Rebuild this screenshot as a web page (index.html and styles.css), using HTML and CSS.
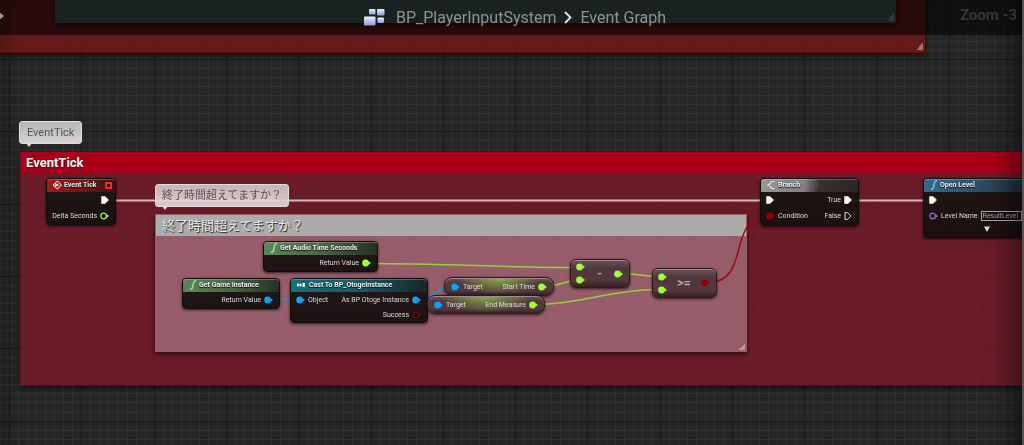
FILE: index.html
```html
<!DOCTYPE html>
<html lang="ja">
<head>
<meta charset="utf-8">
<title>BP_PlayerInputSystem</title>
<link rel="stylesheet" href="styles.css">
</head>
<body>
<svg class="defs" aria-hidden="true">
  <symbol id="pin" viewBox="0 0 9 8"><circle cx="3.6" cy="4" r="3.4" fill="currentColor"/><path d="M6.7 2.2L9 4L6.7 5.8Z" fill="currentColor"/></symbol>
  <symbol id="ring" viewBox="0 0 9 8"><circle cx="3.6" cy="4" r="2.8" fill="#0a0808" stroke="currentColor" stroke-width="1.3"/><path d="M6.8 2.2L9 4L6.8 5.8Z" fill="currentColor"/></symbol>
  <symbol id="exec" viewBox="0 0 8 8"><path d="M.6 .4H4L7.5 4L4 7.6H.6Z" fill="#fff" stroke="#fff" stroke-width=".6"/></symbol>
  <symbol id="exec-off" viewBox="0 0 8 8"><path d="M1 .7H3.6L7 4L3.6 7.3H1Z" fill="none" stroke="#ddd" stroke-width="1"/></symbol>
  <symbol id="func" viewBox="0 0 8 10"><path d="M7.3 1C5.5 .5 4.7 1.5 4.4 3.2L3.6 7C3.3 8.7 2.4 9.6 .8 9" fill="none" stroke="currentColor" stroke-width="1.5"/></symbol>
</svg>
<main class="graph">
  <canvas class="grid" id="grid"></canvas>

  <section class="comment upper"><i class="grip"></i></section>
  <section class="comment teal"><i class="grip"></i></section>
  <section class="comment tick"><h2>EventTick</h2></section>
  <section class="comment finish"><h2>終了時間超えてますか？</h2><i class="grip"></i></section>

  <svg class="wires" aria-hidden="true">
    <g fill="none" stroke-width="1.5">
      <path stroke="#c9bfc1" stroke-width="1.8" d="M108 200.5H768M850 200.5H932"/>
      <path stroke="#93d23c" d="M370 263.5C440 263.5 510 267.5 578 267.5M545 286.5C560 286.5 563 280.5 578 280.5M535 304.5C580 304.5 610 289.5 660 289.5M620 273.5C635 273.5 645 276.5 660 276.5"/>
      <path stroke="#1296e0" d="M271 299.5H297M419 299.5C434 299.5 437 286.5 452 286.5M419 299.5C428 299.5 427 304.5 435 304.5"/>
      <path stroke="#950b10" d="M708 282.5C752 282.5 726 216.5 768 216.5"/>
    </g>
  </svg>

  <div class="bubble bubble-tick">EventTick</div>
  <div class="bubble bubble-finish">終了時間超えてますか？</div>

  <article class="node exec event-tick">
    <header class="red"><svg class="ico" viewBox="0 0 10 10"><path d="M3.5 3V2.6L5.500 1L9.300 5L5.500 9L3.500 7.400V7M3.300 3.200L1 5L3.300 6.800V5.700H6V4.300H3.300Z" fill="none" stroke="#fff" stroke-width="1"/></svg><h3>Event Tick</h3><i class="delegate"></i></header>
    <div class="row end"><svg class="ex"><use href="#exec"/></svg></div>
    <div class="row end"><span>Delta Seconds</span><svg class="pin float"><use href="#ring"/></svg></div>
  </article>

  <article class="node audio">
    <header class="green"><svg class="fn"><use href="#func"/></svg><h3>Get Audio Time Seconds</h3></header>
    <div class="row end"><span>Return Value</span><svg class="pin float"><use href="#pin"/></svg></div>
  </article>

  <article class="node game">
    <header class="green"><svg class="fn"><use href="#func"/></svg><h3>Get Game Instance</h3></header>
    <div class="row end"><span>Return Value</span><svg class="pin object"><use href="#pin"/></svg></div>
  </article>

  <article class="node cast">
    <header class="cyan"><svg class="ico" viewBox="0 0 10 10"><path d="M1 3.500H2.600V6.500H1ZM2.600 4.600H4V3L6 5L4 7V5.400H2.600ZM7 3H9V7H7L6.300 5Z" fill="#fff"/></svg><h3>Cast To BP_OtogeInstance</h3></header>
    <div class="row"><svg class="pin object"><use href="#pin"/></svg><span>Object</span><span class="push">As BP Otoge Instance</span><svg class="pin object"><use href="#pin"/></svg></div>
    <div class="row end"><span>Success</span><svg class="pin bool-off"><use href="#ring"/></svg></div>
  </article>

  <article class="node getter start-time"><svg class="pin object"><use href="#pin"/></svg><span>Target</span><span class="push">Start Time</span><svg class="pin float"><use href="#pin"/></svg></article>
  <article class="node getter end-measure"><svg class="pin object"><use href="#pin"/></svg><span>Target</span><span class="push">End Measure</span><svg class="pin float"><use href="#pin"/></svg></article>

  <article class="node op minus">
    <div class="ins"><svg class="pin float"><use href="#pin"/></svg><svg class="pin float"><use href="#pin"/></svg></div>
    <b>-</b><svg class="pin float"><use href="#pin"/></svg>
  </article>
  <article class="node op compare">
    <div class="ins"><svg class="pin float"><use href="#pin"/></svg><svg class="pin float"><use href="#pin"/></svg></div>
    <b>&gt;=</b><svg class="pin bool"><use href="#pin"/></svg>
  </article>

  <article class="node exec branch">
    <header class="grey"><svg class="ico" viewBox="0 0 10 10"><path d="M8.500 1.500H6.500C4 1.500 4.500 5 2 5C4.500 5 4 8.500 6.500 8.500H8.500M1 5H3" fill="none" stroke="#eee" stroke-width="1.200"/></svg><h3>Branch</h3></header>
    <div class="row"><svg class="ex"><use href="#exec"/></svg><span class="push">True</span><svg class="ex"><use href="#exec"/></svg></div>
    <div class="row"><svg class="pin bool"><use href="#pin"/></svg><span>Condition</span><span class="push">False</span><svg class="ex"><use href="#exec-off"/></svg></div>
  </article>

  <article class="node exec open-level">
    <header class="blue"><svg class="fn"><use href="#func"/></svg><h3>Open Level</h3></header>
    <div class="row"><svg class="ex"><use href="#exec"/></svg></div>
    <div class="row"><svg class="pin name"><use href="#ring"/></svg><label for="level">Level Name</label><input id="level" value="ResultLevel"></div>
    <button class="expand" aria-label="Expand"><svg viewBox="0 0 6 6"><path d="M0 .5H6L3 6Z" fill="#ddd"/></svg></button>
  </article>

  <div class="vignette"></div>

  <nav class="titlebar">
    <svg class="bp" viewBox="0 0 21 17"><defs><linearGradient id="bpfill" x2="0" y2="1"><stop stop-color="#eef0fc"/><stop offset="1" stop-color="#8c9cd8"/></linearGradient></defs><g fill="url(#bpfill)"><rect x="5" y="0" width="6.500" height="5.500" rx="1"/><rect x="13" y="0" width="7.500" height="6.500" rx="1"/><rect x="0" y="7.500" width="11.500" height="9" rx="1"/><rect x="13.500" y="8.500" width="6.500" height="5.500" rx="1"/></g></svg>
    <button>BP_PlayerInputSystem</button>
    <svg class="chevron" viewBox="0 0 8 13"><path d="M1 1L6.500 6.500L1 12" fill="none" stroke="#e4e4e4" stroke-width="1.800"/></svg>
    <button>Event Graph</button>
    <span class="zoom">Zoom -3</span>
  </nav>
  <svg class="edge-pin" viewBox="0 0 4 8"><path d="M0 .5L4 4L0 7.500Z" fill="#999"/></svg>
</main>
<script src="grid.js"></script>
</body>
</html>
```

FILE: grid.js
```js
// Draws the graph's background grid: a dark line on every eighth step.
const canvas = document.getElementById('grid');
const step = 940 / 104;

function drawGrid() {
  const w = canvas.width = canvas.clientWidth;
  const h = canvas.height = canvas.clientHeight;
  const ctx = canvas.getContext('2d');
  const line = (i, origin, vertical) => {
    const p = Math.round(origin + i * step);
    ctx.fillStyle = i % 8 === 0 ? '#191919' : '#313131';
    if (vertical) ctx.fillRect(p, 0, 1, h);
    else ctx.fillRect(0, p, w, 1);
  };
  for (const major of [false, true]) {
    for (let i = -8; i * step < Math.max(w, h) + step; i++) {
      if ((i % 8 === 0) !== major) continue;
      line(i, 9, true);
      line(i, 59, false);
    }
  }
}

drawGrid();
window.addEventListener('resize', drawGrid);
```

FILE: styles.css
```css
* { box-sizing: border-box; }
body {
  margin: 0;
  background: #262626;
  color: #dcdcdc;
  font-family: Roboto, "Noto Sans CJK JP", sans-serif;
}
h2, h3 { margin: 0; }
button { border: 0; padding: 0; background: none; color: inherit; font: inherit; }
.defs { position: absolute; width: 0; height: 0; }

.graph {
  position: relative;
  min-height: 100vh;
  overflow: hidden;
  border-right: 2px solid #555;
}
.grid, .wires, .vignette { position: absolute; inset: 0; width: 100%; height: 100%; }
.vignette { pointer-events: none; box-shadow: inset -30px 0 30px -22px rgba(0, 0, 0, .5), inset 20px 0 20px -18px rgba(0, 0, 0, .3); }

/* comment boxes */
.comment { position: absolute; box-shadow: 0 2px 5px rgba(0, 0, 0, .6); }
.upper { left: -10px; top: -10px; width: 935px; height: 63px; background: rgba(130, 20, 22, .68); border-bottom: 1px solid #68090c; }
.teal { left: 55px; top: -10px; width: 841px; height: 33px; background: rgba(62, 92, 92, .88); }
.tick { left: 20px; right: -10px; top: 152px; height: 234px; background: rgba(138, 22, 42, .68); border-bottom: 1px solid #5c0712; }
.finish { left: 155px; top: 214px; width: 592px; height: 138px; padding: 1px; background: rgba(205, 168, 180, .47); }
.comment h2 { text-shadow: 1px 1px 1px #222; color: #f0f0f0; }
.tick h2 { margin-left: 1px; padding-left: 5px; background: #a90017; font-size: 13px; line-height: 21px; }
.finish h2 { padding-left: 6px; background: #ababab; font-size: 13px; font-weight: 400; line-height: 21px; color: #e8e8e8; }
.grip { position: absolute; right: 2px; bottom: 2px; width: 7px; height: 7px; background: linear-gradient(135deg, transparent 50%, rgba(225, 200, 200, .5) 50%); }

.bubble {
  position: absolute;
  padding: 0 6px;
  border: 1px solid #e2dddd;
  border-radius: 3px;
  background: linear-gradient(rgba(190, 190, 190, .95), rgba(222, 222, 222, .95));
  color: #555;
  font-size: 11px;
  line-height: 21px;
}
.bubble::after {
  content: "";
  position: absolute;
  left: 6px;
  top: 100%;
  border: 3px solid transparent;
  border-top: 4px solid #ddd;
}
.bubble-tick { left: 19px; top: 121px; padding: 0 7px; }
.bubble-finish { left: 155px; top: 184px; background: linear-gradient(rgba(208, 190, 194, .94), rgba(230, 215, 218, .92)); }

/* nodes */
.node {
  position: absolute;
  border: 1px solid #100c0c;
  border-radius: 4px;
  background: linear-gradient(rgba(30, 21, 21, .96), rgba(24, 16, 16, .96));
  box-shadow: 0 1px 3px rgba(0, 0, 0, .7);
  font-size: 7px;
  line-height: 8px;
  white-space: nowrap;
}
.node header {
  display: flex;
  align-items: center;
  gap: 2px;
  height: 13px;
  padding: 0 5px 2px;
  border-top: 1px solid rgba(255, 255, 255, .25);
  border-radius: 3px 3px 0 0;
}
.node h3 { font-size: 7px; line-height: 8px; color: #f0f0f0; text-shadow: 0 1px 1px #000; }
.red { background: linear-gradient(90deg, #a01c1c, #6b1515 60%, #3c1212); }
.green { background: linear-gradient(90deg, #5d8458, #4a6747 50%, #263024); }
.cyan { background: linear-gradient(90deg, #137079, #165a61 50%, #1c2526); }
.grey { background: linear-gradient(100deg, #969696, #808080 45%, #373232 60%, #2a2525); }
.blue { background: linear-gradient(90deg, #35698c, #2c5370 45%, #1f2830); }
.ico { width: 10px; height: 10px; }
.fn { width: 8px; height: 10px; margin: 0 0 0 1px; color: #8cea8c; }
.blue .fn { color: #6cc8f8; }
.delegate { width: 7px; height: 7px; margin-left: auto; border: 2px solid #f02a2a; background: #300; }
.row { display: flex; align-items: center; gap: 3px; height: 15px; padding: 0 6px 0 5px; }
.exec .row { height: 16px; }
.end { justify-content: flex-end; }
.push { margin-left: auto; }
.pin { flex: none; width: 9px; height: 8px; }
.ex { flex: none; width: 8px; height: 8px; }
.float { color: #9dff3c; }
.object { color: #08a3f5; }
.bool { color: #980000; }
.bool-off { color: #780606; }
.name { color: #a868d8; }

.event-tick { left: 46px; top: 178px; width: 70px; height: 47px; }
.event-tick header { padding-right: 3px; }
.audio { left: 263px; top: 241px; width: 115px; height: 31px; }
.game { left: 182px; top: 278px; width: 98px; height: 31px; }
.cast { left: 290px; top: 278px; width: 138px; height: 45px; }
.cast .ico { margin-right: 1px; }
.branch { left: 760px; top: 178px; width: 99px; height: 48px; }
.open-level { left: 923px; top: 178px; width: 110px; height: 60px; }
.open-level input {
  width: 41px;
  height: 10px;
  padding: 0 1px;
  border: 1px solid #aaa;
  background: #141010;
  color: #aaa;
  font: 7px/8px Roboto, sans-serif;
}
.expand { display: block; margin-left: 60px; height: 10px; }
.expand svg { display: block; width: 6px; height: 6px; }

.getter, .op {
  border-color: #2c1a1e;
  background: linear-gradient(rgba(105, 85, 88, .95), rgba(76, 52, 56, .95) 30%, rgba(82, 54, 60, .95) 75%, rgba(48, 30, 34, .95));
  box-shadow: 0 1px 3px rgba(0, 0, 0, .7), inset 0 1px 0 rgba(255, 255, 255, .35);
}
.getter { display: flex; align-items: center; gap: 3px; height: 19px; padding: 0 6px; border-radius: 8px; }
.getter::before {
  content: "";
  position: absolute;
  inset: 1px 12px 0;
  background: radial-gradient(ellipse at top, rgba(145, 205, 70, .75), transparent 70%);
}
.getter > * { position: relative; }
.start-time { left: 444px; top: 277px; width: 110px; }
.end-measure { left: 427px; top: 295px; width: 118px; }
.op { display: flex; align-items: center; justify-content: space-between; padding: 0 6px 0 5px; border-radius: 6px; }
.op b { font-size: 13px; line-height: 14px; color: #b9a5a8; }
.ins { display: flex; flex-direction: column; gap: 5px; }
.minus { left: 570px; top: 259px; width: 60px; height: 29px; }
.compare { left: 652px; top: 268px; width: 65px; height: 30px; }

/* breadcrumb bar */
.titlebar {
  position: relative;
  display: flex;
  align-items: center;
  justify-content: center;
  height: 35px;
  padding-left: 8px;
  background: rgba(0, 0, 0, .6);
  color: #8e9292;
  font-size: 16px;
  line-height: 20px;
}
.bp { width: 21px; height: 17px; margin-right: 11px; }
.chevron { width: 8px; height: 13px; margin: 0 8px; }
.zoom { position: absolute; right: 5px; top: 5px; color: #363636; font-size: 15px; font-weight: 700; }
.edge-pin { position: absolute; left: 0; top: 12px; width: 4px; height: 8px; }
```
